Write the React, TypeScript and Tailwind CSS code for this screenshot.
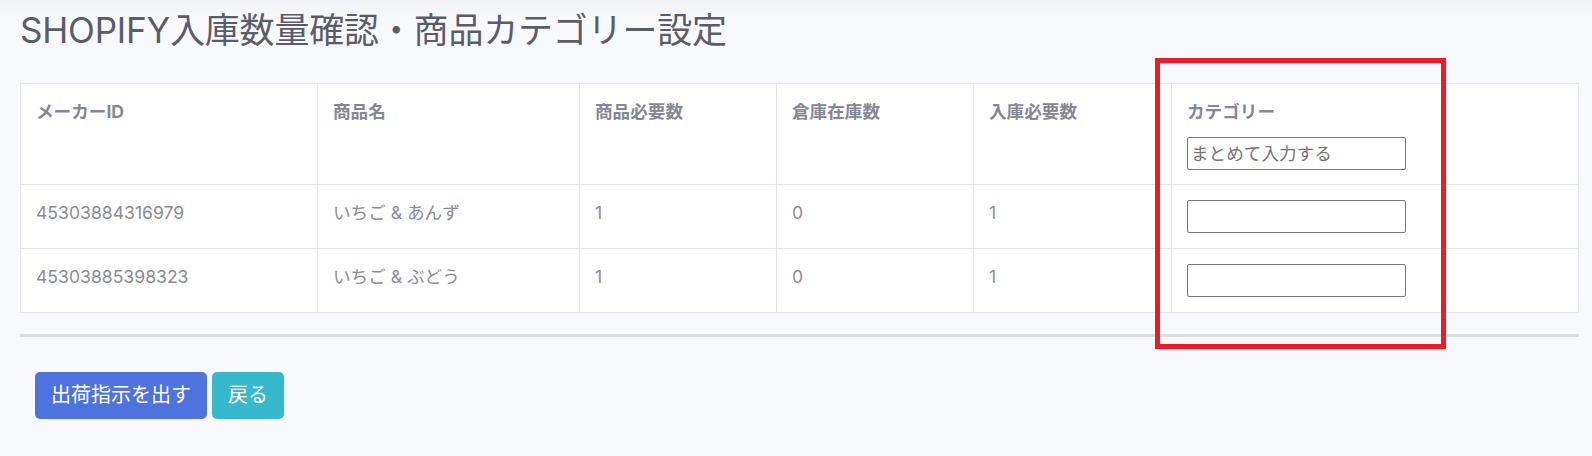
const rows = [
	{ id: "45303884316979", name: "いちご & あんず", need: 1, stock: 0, inbound: 1 },
	{ id: "45303885398323", name: "いちご & ぶどう", need: 1, stock: 0, inbound: 1 },
];

const headers = ["メーカーID", "商品名", "商品必要数", "倉庫在庫数", "入庫必要数"];

const App = () => {
	return (
		<div
			className="relative min-h-[456px] bg-[#f8f9fc] bg-[linear-gradient(to_bottom,#eef0f4,#f8f9fc_18px)] pl-[20px] pr-[13px] pt-[9px] text-[#858796]"
			style={{ fontFamily: '"Inter", "Noto Sans CJK JP", sans-serif' }}
		>
			<h1 className="text-[35px] leading-[42px] font-normal tracking-[-0.2px] text-[#5a5c69]">
				SHOPIFY入庫数量確認・商品カテゴリー設定
			</h1>

			<table className="mt-[32px] w-full table-fixed border-collapse bg-white text-[17.6px] leading-[26.5px]">
				<colgroup>
					<col className="w-[297px]" />
					<col className="w-[262px]" />
					<col className="w-[197px]" />
					<col className="w-[197px]" />
					<col className="w-[198px]" />
					<col />
				</colgroup>
				<thead>
					<tr>
						{headers.map((h) => (
							<th
								key={h}
								className="border border-[#e3e6f0] px-[15px] pt-[15px] pb-[14px] text-left align-top font-bold"
							>
								{h}
							</th>
						))}
						<th className="border border-[#e3e6f0] px-[15px] pt-[15px] pb-[14px] text-left align-top font-bold">
							<div>カテゴリー</div>
							<input
								type="text"
								placeholder="まとめて入力する"
								className="mt-[11px] block h-[33px] w-[219px] rounded-[2px] border border-[#767676] bg-white px-[3px] font-normal text-[17.6px] placeholder:text-[#757575]"
							/>
						</th>
					</tr>
				</thead>
				<tbody>
					{rows.map((r) => (
						<tr key={r.id} className="text-[#8a8c9a]">
							<td className="border border-[#e3e6f0] px-[15px] py-[15px] align-top">{r.id}</td>
							<td className="border border-[#e3e6f0] px-[15px] py-[15px] align-top">{r.name}</td>
							<td className="border border-[#e3e6f0] px-[15px] py-[15px] align-top">{r.need}</td>
							<td className="border border-[#e3e6f0] px-[15px] py-[15px] align-top">{r.stock}</td>
							<td className="border border-[#e3e6f0] px-[15px] py-[15px] align-top">{r.inbound}</td>
							<td className="border border-[#e3e6f0] px-[15px] py-[15px] align-top">
								<input
									type="text"
									className="block h-[33px] w-[219px] rounded-[2px] border border-[#767676] bg-white px-[3px]"
								/>
							</td>
						</tr>
					))}
				</tbody>
			</table>

			<hr className="mt-[21px] h-[3px] border-0 bg-[#dcdde1]" />

			<div className="flex gap-[5px] pt-[35px] pl-[15px]">
				<button
					type="button"
					className="h-[47px] rounded-[5px] bg-[#4e73df] px-[16px] text-[20px] text-white"
				>
					出荷指示を出す
				</button>
				<button
					type="button"
					className="h-[47px] rounded-[5px] bg-[#36b9cc] px-[16px] text-[20px] text-white"
				>
					戻る
				</button>
			</div>

			{/* red annotation box */}
			<div className="pointer-events-none absolute left-[1155px] top-[58px] h-[291px] w-[291px] border-[5px] border-[#ed1c24]" />
		</div>
	);
};

export default App;
